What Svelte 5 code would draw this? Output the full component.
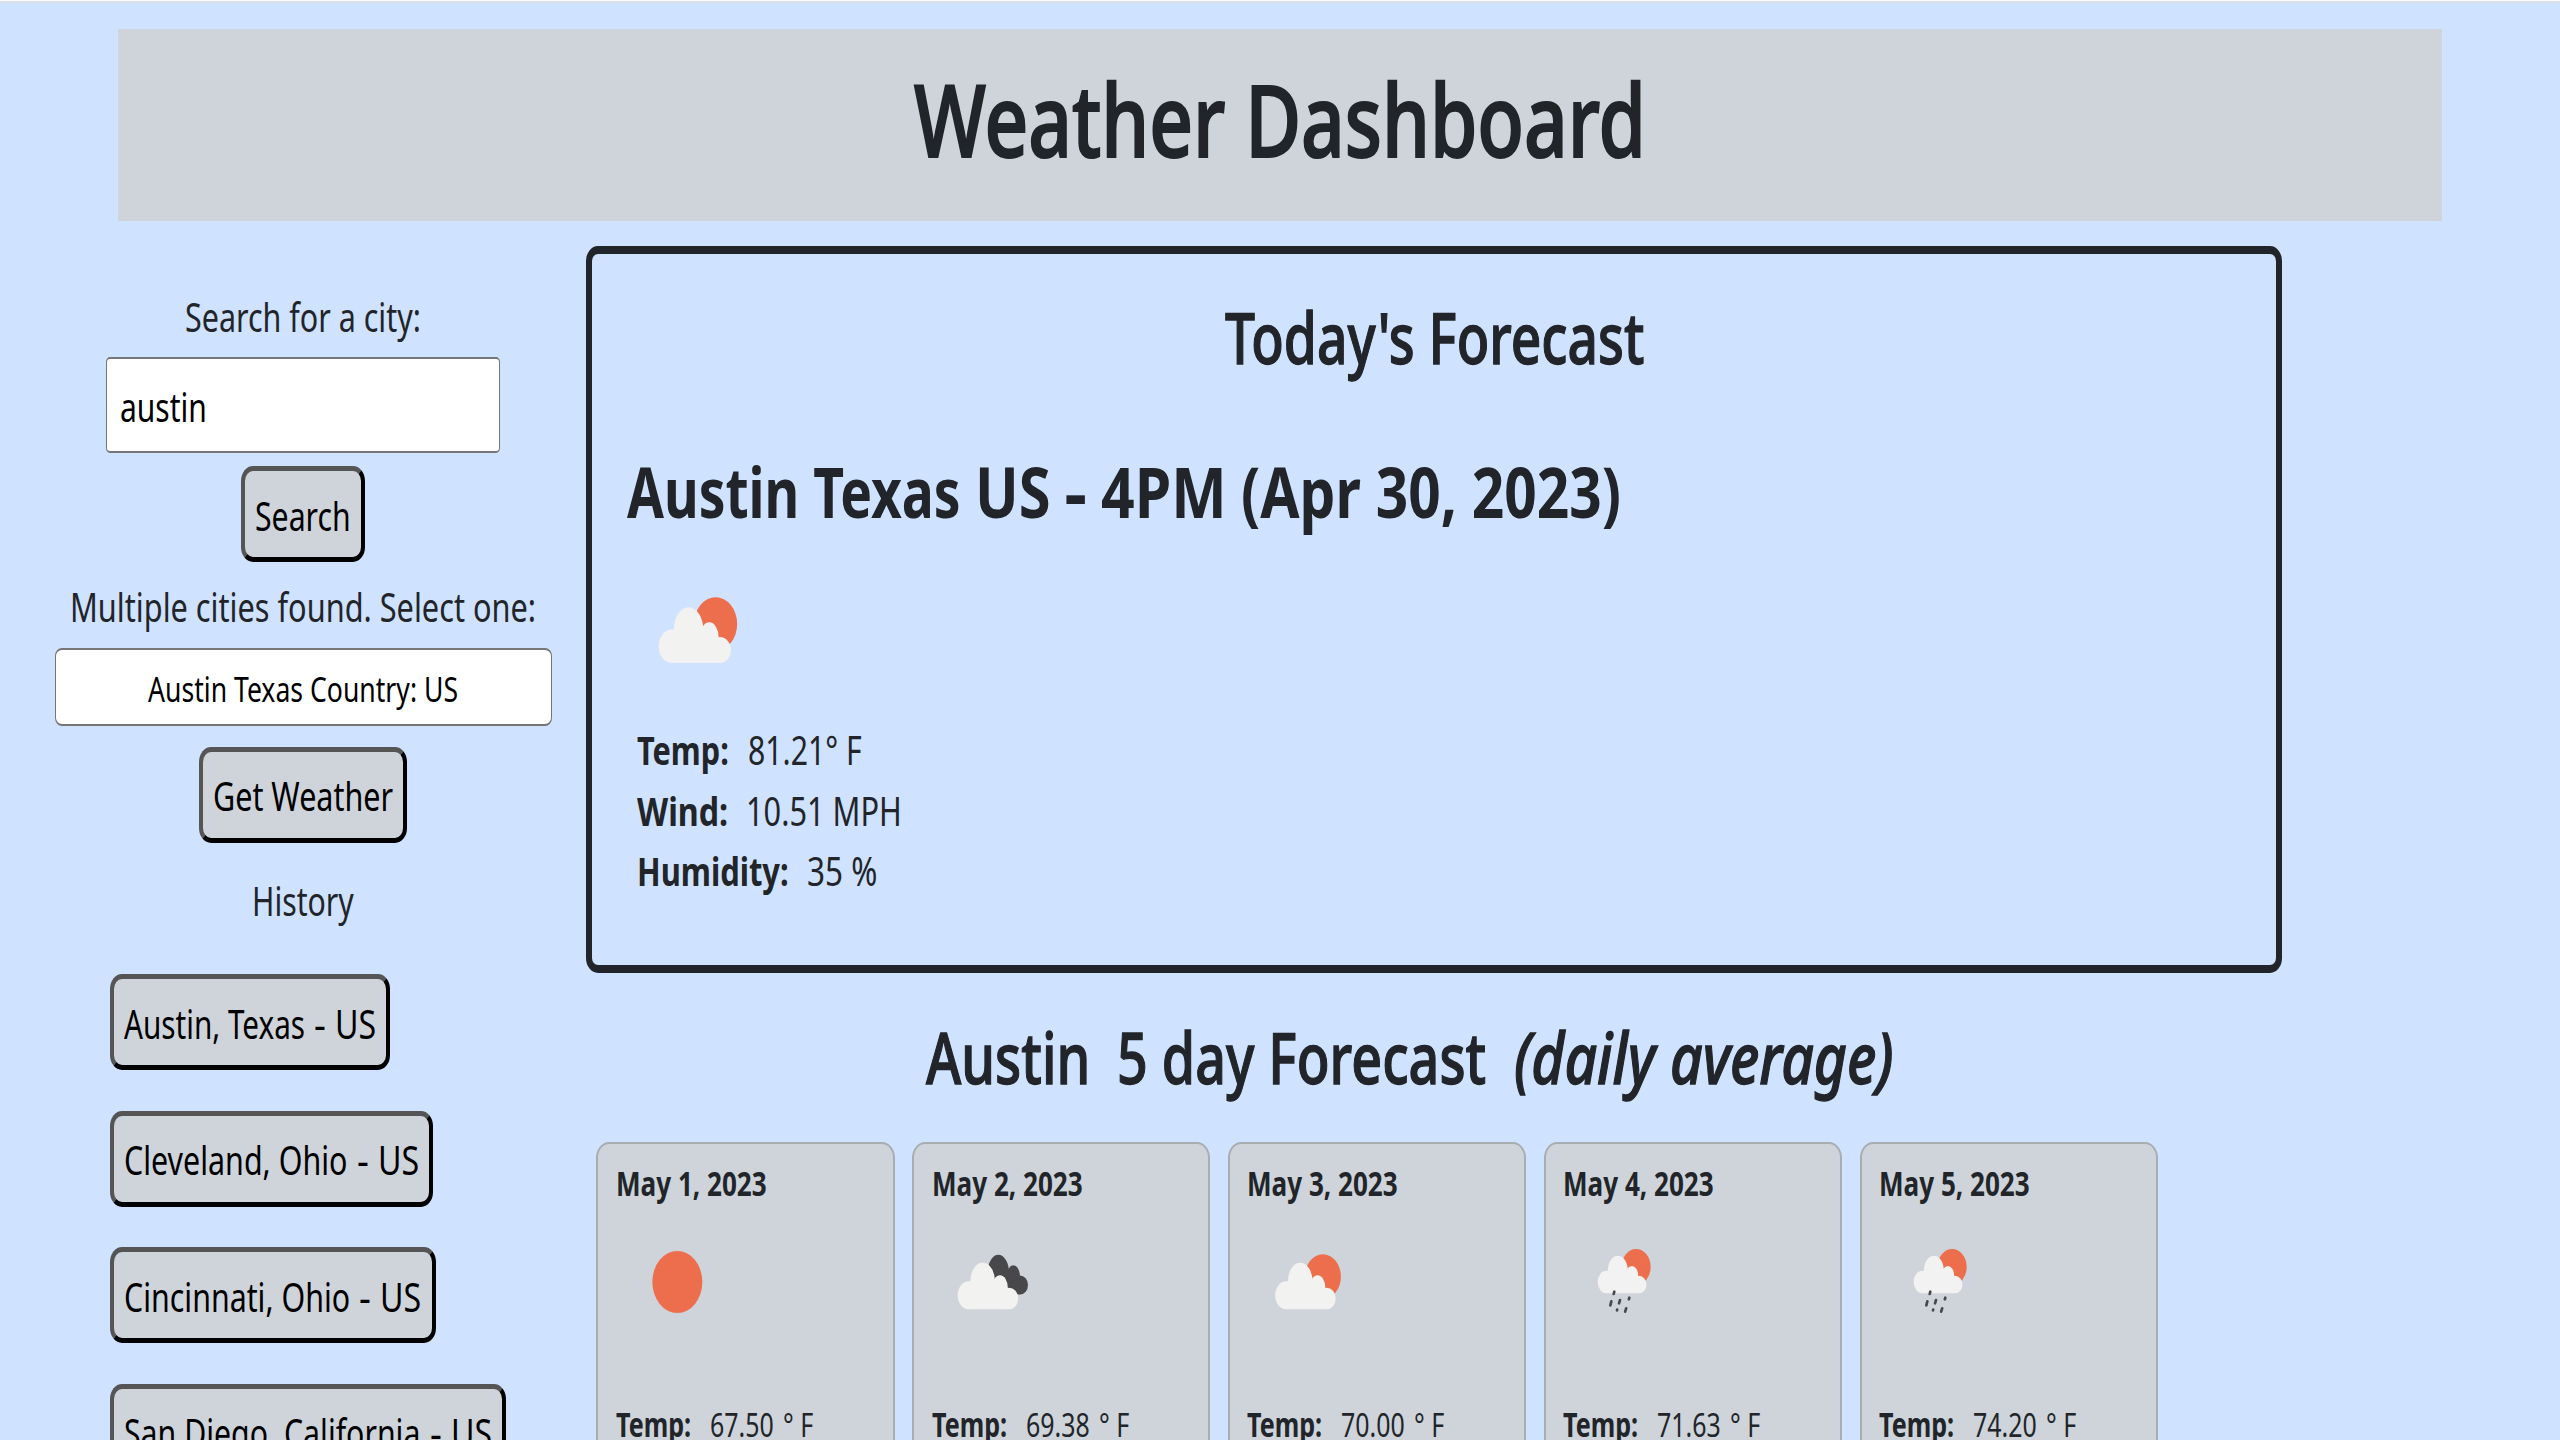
<script>
  const history = [
    { name: 'Austin, Texas', width: 280.5, text: 181 },
    { name: 'Cleveland, Ohio', width: 323.5, text: 223.5 },
    { name: 'Cincinnati, Ohio', width: 326, text: 226 },
    { name: 'San Diego, California', width: 396.5, text: 296.5 }
  ];

  const today = [
    { label: 'Temp:', lw: 92, value: '81.21° F', vw: 114, gap: 19 },
    { label: 'Wind:', lw: 91, value: '10.51 MPH', vw: 156, gap: 18 },
    { label: 'Humidity:', lw: 151.5, value: '35 %', vw: 70, gap: 18.5 }
  ];

  const days = [
    { date: 'May 1, 2023', icon: 'sun', temp: '67.50' },
    { date: 'May 2, 2023', icon: 'broken', temp: '69.38' },
    { date: 'May 3, 2023', icon: 'few', temp: '70.00' },
    { date: 'May 4, 2023', icon: 'rain', temp: '71.63' },
    { date: 'May 5, 2023', icon: 'rain', temp: '74.20' }
  ];

  // Condenses a text run horizontally so that it fills the given width.
  function fit(node, width) {
    const natural = node.offsetWidth;
    if (natural) node.style.transform = `scaleX(${width / natural})`;
  }
</script>

{#snippet run(text, width)}
  <span class="run" style:width="{width}px"><span class="ink" use:fit={width}>{text}</span></span>
{/snippet}

{#snippet cloud()}
  <ellipse cx="207" cy="226" rx="33" ry="42" />
  <ellipse cx="249" cy="184" rx="37" ry="56" />
  <ellipse cx="301" cy="203" rx="23.5" ry="37" />
  <ellipse cx="328" cy="235.500" rx="27.500" ry="32.500" />
  <path d="M207 210H325V268H207Z" />
{/snippet}

{#snippet sunCloud(fill)}
  <ellipse cx="317" cy="170" rx="54" ry="67" fill="#ec6e4c" />
  <g fill={fill}>{@render cloud()}</g>
{/snippet}

<div class="page">
  <div class="strip"></div>
  <header>
    <h1>{@render run('Weather Dashboard', 732)}</h1>
  </header>

  <div class="columns">
    <aside>
      <div class="label">{@render run('Search for a city:', 236)}</div>
      <div class="input">{@render run('austin', 87)}</div>
      <button class="search">{@render run('Search', 96)}</button>
      <div class="label second">{@render run('Multiple cities found. Select one:', 466)}</div>
      <div class="select">{@render run('Austin Texas Country: US', 310)}</div>
      <button class="get">{@render run('Get Weather', 180)}</button>
      <div class="label third">{@render run('History', 102)}</div>
      <div class="history">
        {#each history as city}
          <button style:width="{city.width}px">
            <span class="place">
              {@render run(city.name, city.text)}
              {@render run('-', 12)}
              {@render run('US', 41)}
            </span>
          </button>
        {/each}
      </div>
    </aside>

    <main>
      <section class="today">
        <h2>{@render run("Today's Forecast", 419)}</h2>
        <h3>
          {@render run('Austin Texas', 334)}
          {@render run('US', 76)}
          {@render run('-', 22)}
          {@render run('4PM', 126)}
          {@render run('(Apr 30, 2023)', 380)}
        </h3>
        <svg class="now" viewBox="0 0 300 240">
          <g transform="translate(26 219) scale(1.195) translate(-174 -268)">
            {@render sunCloud('#f2f2f0')}
          </g>
        </svg>
        {#each today as row}
          <div class="row" style:column-gap="{row.gap}px">
            <b>{@render run(row.label, row.lw)}</b>
            {@render run(row.value, row.vw)}
          </div>
        {/each}
      </section>

      <h2 class="five">
        {@render run('Austin', 164)}
        {@render run('5 day Forecast', 369)}
        <i>{@render run('(daily average)', 380)}</i>
      </h2>

      <div class="cards">
        {#each days as day}
          <article>
            <b class="date">{@render run(day.date, 151)}</b>
            <svg viewBox="0 0 330 240">
              {#if day.icon === 'sun'}
                <ellipse cx="124" cy="126" rx="75" ry="93" fill="#ec6e4c" />
              {:else if day.icon === 'broken'}
                <g transform="translate(-157 -60)">
                  <g fill="#48484a">
                    <ellipse cx="296" cy="158" rx="32" ry="54" />
                    <ellipse cx="341" cy="170" rx="20" ry="34" />
                    <ellipse cx="361" cy="195" rx="24" ry="28.500" />
                    <path d="M290 150H345L361 180V223H300Z" />
                  </g>
                  <g fill="#f2f2f0">{@render cloud()}</g>
                </g>
              {:else if day.icon === 'few'}
                <g transform="translate(-149.400 -60)">{@render sunCloud('#f2f2f0')}</g>
              {:else}
                <g transform="translate(-70 -60)">
                  <g transform="translate(114 220) scale(.807) translate(-174 -268)">
                    {@render sunCloud('#f2f2f2')}
                  </g>
                  <path
                    class="drops"
                    d="M164 215L162 222M155 244L152 256M181 240L178 250M209 233L207.500 238M172.500 269L172 271M199.500 265L196.500 275"
                  />
                </g>
              {/if}
            </svg>
            <div class="temp">
              <b>{@render run('Temp:', 75)}</b>
              {@render run(day.temp, 64)}
              {@render run('° F', 30)}
            </div>
          </article>
        {/each}
      </div>
    </main>
  </div>
</div>

<style>
  :global(body) {
    margin: 0;
    overflow: hidden;
    background: #cfe2ff;
  }
  .page {
    box-sizing: border-box;
    width: 2560px;
    height: 1440px;
    overflow: hidden;
    background: #cfe2ff;
    color: #212529;
    font-family: 'Noto Sans', 'Open Sans', sans-serif;
    font-size: 40px;
    line-height: 60px;
  }
  .strip {
    height: 2px;
    border-top: 1px solid #fafcfc;
    background: #d9dfe2;
  }
  .run {
    display: inline-block;
    white-space: nowrap;
    text-align: left;
    flex: none;
  }
  .ink {
    display: inline-block;
    padding-top: 1px;
    transform-origin: 0 50%;
  }
  header {
    margin: 25.500px 117.600px 0;
    height: 192px;
    background: #ced4da;
    text-align: center;
    overflow: hidden;
  }
  h1,
  h2,
  h3 {
    margin: 0;
    height: 90px;
    font-weight: 500;
    font-size: 70px;
    line-height: 90px;
    text-align: center;
  }
  h2 {
    -webkit-text-stroke: 1.300px #212529;
  }
  h1 {
    padding-top: 24px;
    font-size: 99.500px;
    line-height: 130px;
    -webkit-text-stroke: 2px #212529;
  }
  .columns {
    display: flex;
    align-items: flex-start;
  }
  aside {
    box-sizing: border-box;
    width: 586px;
    padding: 65px 0 0 20px;
    display: flex;
    flex-direction: column;
    align-items: center;
    flex: none;
  }
  .label {
    height: 60px;
  }
  .input,
  .select {
    box-sizing: border-box;
    border: solid #767676;
    border-width: 2px 1px;
    background: #fff;
    color: #000;
  }
  .input {
    width: 394px;
    height: 96px;
    margin-top: 11.500px;
    padding: 17px 0 0 12.500px;
    border-radius: 4px / 5px;
  }
  button {
    box-sizing: border-box;
    display: flex;
    justify-content: center;
    align-items: center;
    height: 96px;
    padding: 2px 0 0;
    border-style: solid;
    border-width: 5px 4px;
    border-color: #555 #000 #000 #555;
    border-radius: 12px / 15px;
    background: #ced4da;
    color: #000;
    font: inherit;
  }
  .place {
    display: flex;
    gap: 9px;
  }
  .search {
    width: 123.500px;
    margin-top: 13px;
  }
  .second {
    margin-top: 14px;
  }
  .select {
    width: 497px;
    height: 78px;
    margin-top: 12px;
    border-radius: 7px / 8px;
    font-size: 35px;
    line-height: 75px;
    text-align: center;
  }
  .get {
    width: 207.500px;
    margin-top: 20.500px;
  }
  .third {
    margin-top: 27px;
  }
  .history {
    align-self: flex-start;
    margin: 44.500px 0 0 89.500px;
    display: flex;
    flex-direction: column;
    gap: 40.500px;
  }
  main {
    padding-top: 25.500px;
    width: 1696px;
    flex: none;
  }
  .today {
    box-sizing: border-box;
    height: 727px;
    border: solid #212529;
    border-width: 8px 6px;
    border-radius: 12px / 15px;
    padding-top: 37px;
  }
  h3 {
    display: flex;
    gap: 14px;
    margin: 64px 0 0 34.500px;
    font-weight: 700;
  }
  svg {
    display: block;
  }
  .now {
    width: 100px;
    height: 80px;
    margin: 54.700px 0 49.600px 58px;
  }
  .row {
    display: flex;
    height: 60.500px;
    padding-left: 44.500px;
  }
  .five {
    display: flex;
    justify-content: flex-start;
    gap: 27.500px;
    margin: 38px 0 41px;
    padding-left: 339.500px;
  }
  .cards {
    display: flex;
    gap: 17.500px;
    margin-left: 10.400px;
  }
  article {
    box-sizing: border-box;
    flex: none;
    width: 298.300px;
    height: 400px;
    border: 2px solid #a8adb1;
    border-radius: 13px / 16px;
    background: #ced4da;
    padding: 13px 0 0 17.500px;
    font-size: 33.500px;
    line-height: 50px;
  }
  .date {
    display: block;
    height: 50px;
  }
  article svg {
    width: 110px;
    height: 80px;
    margin: 33px 0 77.700px 20px;
  }
  .drops {
    fill: none;
    stroke: #48484a;
    stroke-width: 8;
    stroke-linecap: round;
  }
  .temp {
    display: flex;
  }
  .temp b {
    margin-right: 19px;
  }
  .temp b + :global(.run) {
    margin-right: 9px;
  }
</style>
